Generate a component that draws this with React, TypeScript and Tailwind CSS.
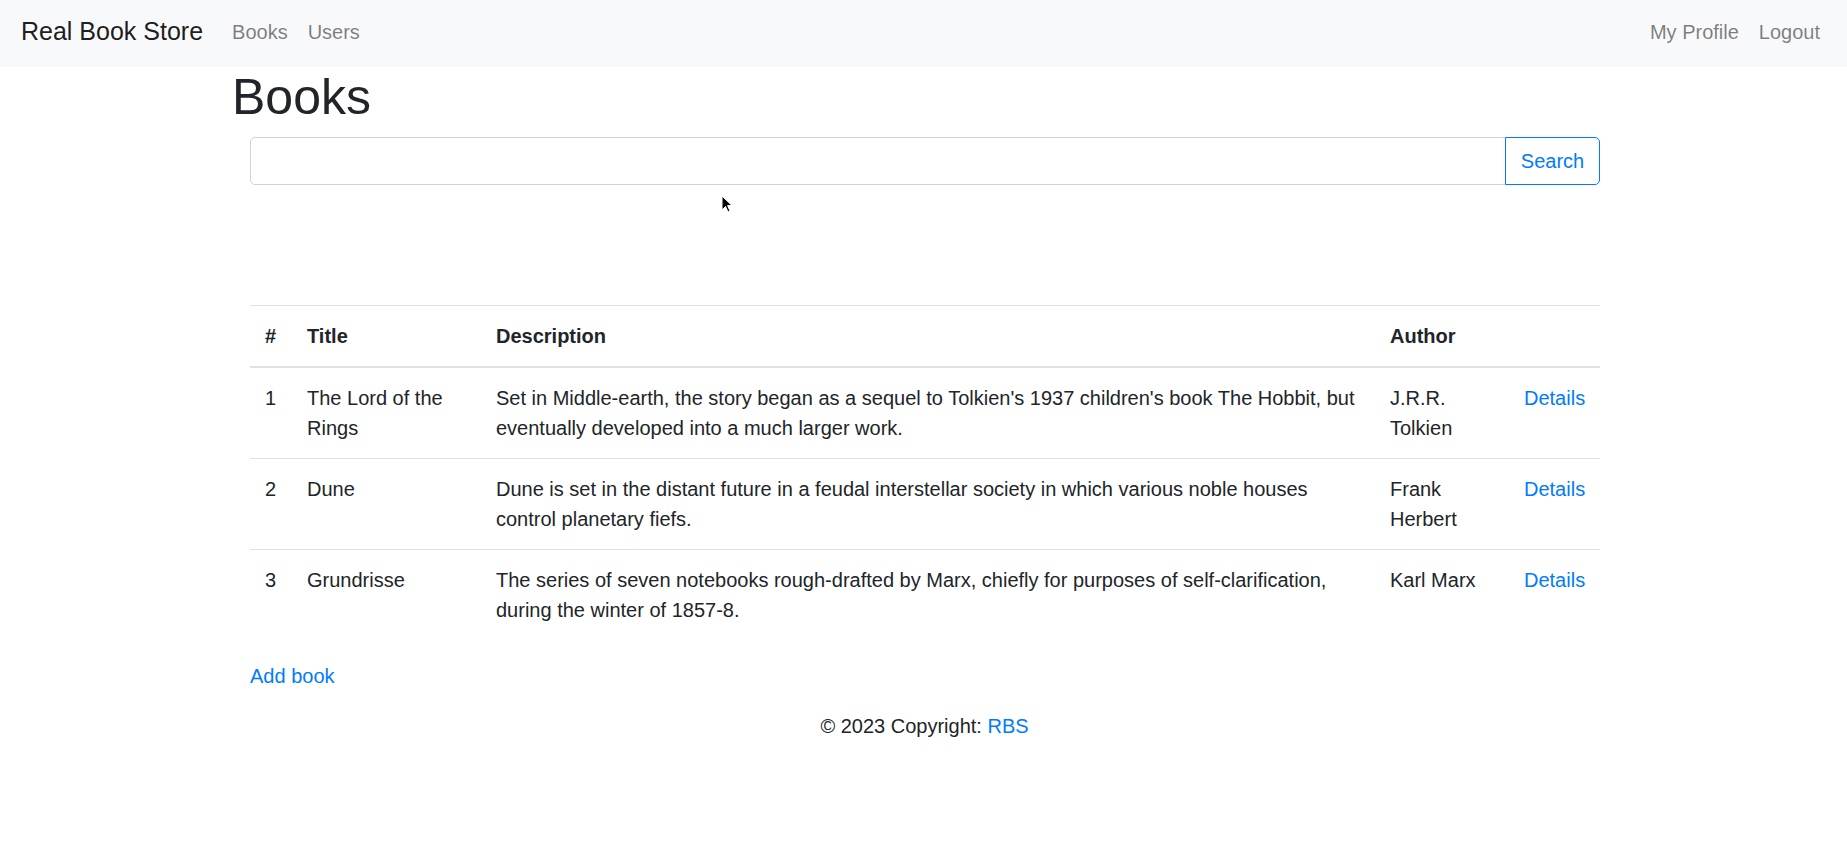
import React from 'react';

interface Book {
  id: number;
  title: string;
  description: string;
  author: string;
}

const books: Book[] = [
  {
    id: 1,
    title: 'The Lord of the Rings',
    description:
      "Set in Middle-earth, the story began as a sequel to Tolkien's 1937 children's book The Hobbit, but eventually developed into a much larger work.",
    author: 'J.R.R. Tolkien',
  },
  {
    id: 2,
    title: 'Dune',
    description:
      'Dune is set in the distant future in a feudal interstellar society in which various noble houses control planetary fiefs.',
    author: 'Frank Herbert',
  },
  {
    id: 3,
    title: 'Grundrisse',
    description:
      'The series of seven notebooks rough-drafted by Marx, chiefly for purposes of self-clarification, during the winter of 1857-8.',
    author: 'Karl Marx',
  },
];

const App: React.FC = () => {
  return (
    <div className="relative min-h-[850px] bg-white text-[20px] leading-[30px] text-[#212529] [font-family:'Liberation_Sans',Arial,sans-serif]">
      {/* navbar */}
      <nav className="flex h-[67px] items-start bg-[#f8f9fa] pl-[21px] pr-[17px]">
        <a href="#" className="mr-[19px] mt-[12px] text-[25px] leading-[38px] text-[rgba(0,0,0,0.9)]">
          Real Book Store
        </a>
        <div className="mt-[17px] flex">
          <a href="#" className="px-[10px] text-[rgba(0,0,0,0.5)]">Books</a>
          <a href="#" className="px-[10px] text-[rgba(0,0,0,0.5)]">Users</a>
        </div>
        <div className="ml-auto mt-[17px] flex">
          <a href="#" className="px-[10px] text-[rgba(0,0,0,0.5)]">My Profile</a>
          <a href="#" className="px-[10px] text-[rgba(0,0,0,0.5)]">Logout</a>
        </div>
      </nav>

      <div className="mx-auto w-[1388px]">
        <h1 className="mb-[10px] ml-[2.5px] text-[50px] font-medium leading-[60px]">Books</h1>

        <div className="ml-[20.5px] w-[1350px]">
          <form className="flex" onSubmit={(e) => e.preventDefault()}>
            <input
              type="text"
              className="h-[47.5px] flex-1 rounded-l-[5px] border border-[#ced4da] px-[15px] outline-none"
            />
            <button
              type="submit"
              className="-ml-px h-[47.5px] w-[95px] rounded-r-[5px] border border-[#007bff] text-[#007bff]"
            >
              Search
            </button>
          </form>

          <table className="mb-[21px] mt-[120px] w-full table-fixed border-collapse">
            <colgroup>
              <col className="w-[42px]" />
              <col className="w-[189px]" />
              <col className="w-[894px]" />
              <col className="w-[134px]" />
              <col className="w-[91px]" />
            </colgroup>
            <thead>
              <tr>
                <th className="border-t border-b-2 border-[#dee2e6] p-[15px] text-left font-bold">#</th>
                <th className="border-t border-b-2 border-[#dee2e6] p-[15px] text-left font-bold">Title</th>
                <th className="border-t border-b-2 border-[#dee2e6] p-[15px] text-left font-bold">Description</th>
                <th className="border-t border-b-2 border-[#dee2e6] p-[15px] text-left font-bold">Author</th>
                <th className="border-t border-b-2 border-[#dee2e6] p-[15px] text-left font-bold"></th>
              </tr>
            </thead>
            <tbody>
              {books.map((b, i) => (
                <tr key={b.id}>
                  <td className={`p-[15px] align-top ${i > 0 ? 'border-t border-[#dee2e6]' : ''}`}>{b.id}</td>
                  <td className={`p-[15px] align-top ${i > 0 ? 'border-t border-[#dee2e6]' : ''}`}>{b.title}</td>
                  <td className={`p-[15px] align-top ${i > 0 ? 'border-t border-[#dee2e6]' : ''}`}>{b.description}</td>
                  <td className={`p-[15px] align-top ${i > 0 ? 'border-t border-[#dee2e6]' : ''}`}>{b.author}</td>
                  <td className={`p-[15px] align-top ${i > 0 ? 'border-t border-[#dee2e6]' : ''}`}>
                    <a href="#" className="text-[#007bff]">Details</a>
                  </td>
                </tr>
              ))}
            </tbody>
          </table>

          <a href="#" className="text-[#007bff]">Add book</a>
        </div>
      </div>

      <footer className="py-[20px] pl-[2px] text-center">
        © 2023 Copyright: <a href="#" className="text-[#007bff]">RBS</a>
      </footer>

      {/* mouse pointer captured in the screenshot */}
      <svg className="absolute left-[721px] top-[195px]" width="12" height="19" viewBox="0 0 12 19">
        <path d="M1 1 L1 15 L4.5 11.5 L7 17 L9 16 L6.6 10.6 L11 10.6 Z" fill="#000" stroke="#fff" strokeWidth="1" />
      </svg>
    </div>
  );
};

export default App;
